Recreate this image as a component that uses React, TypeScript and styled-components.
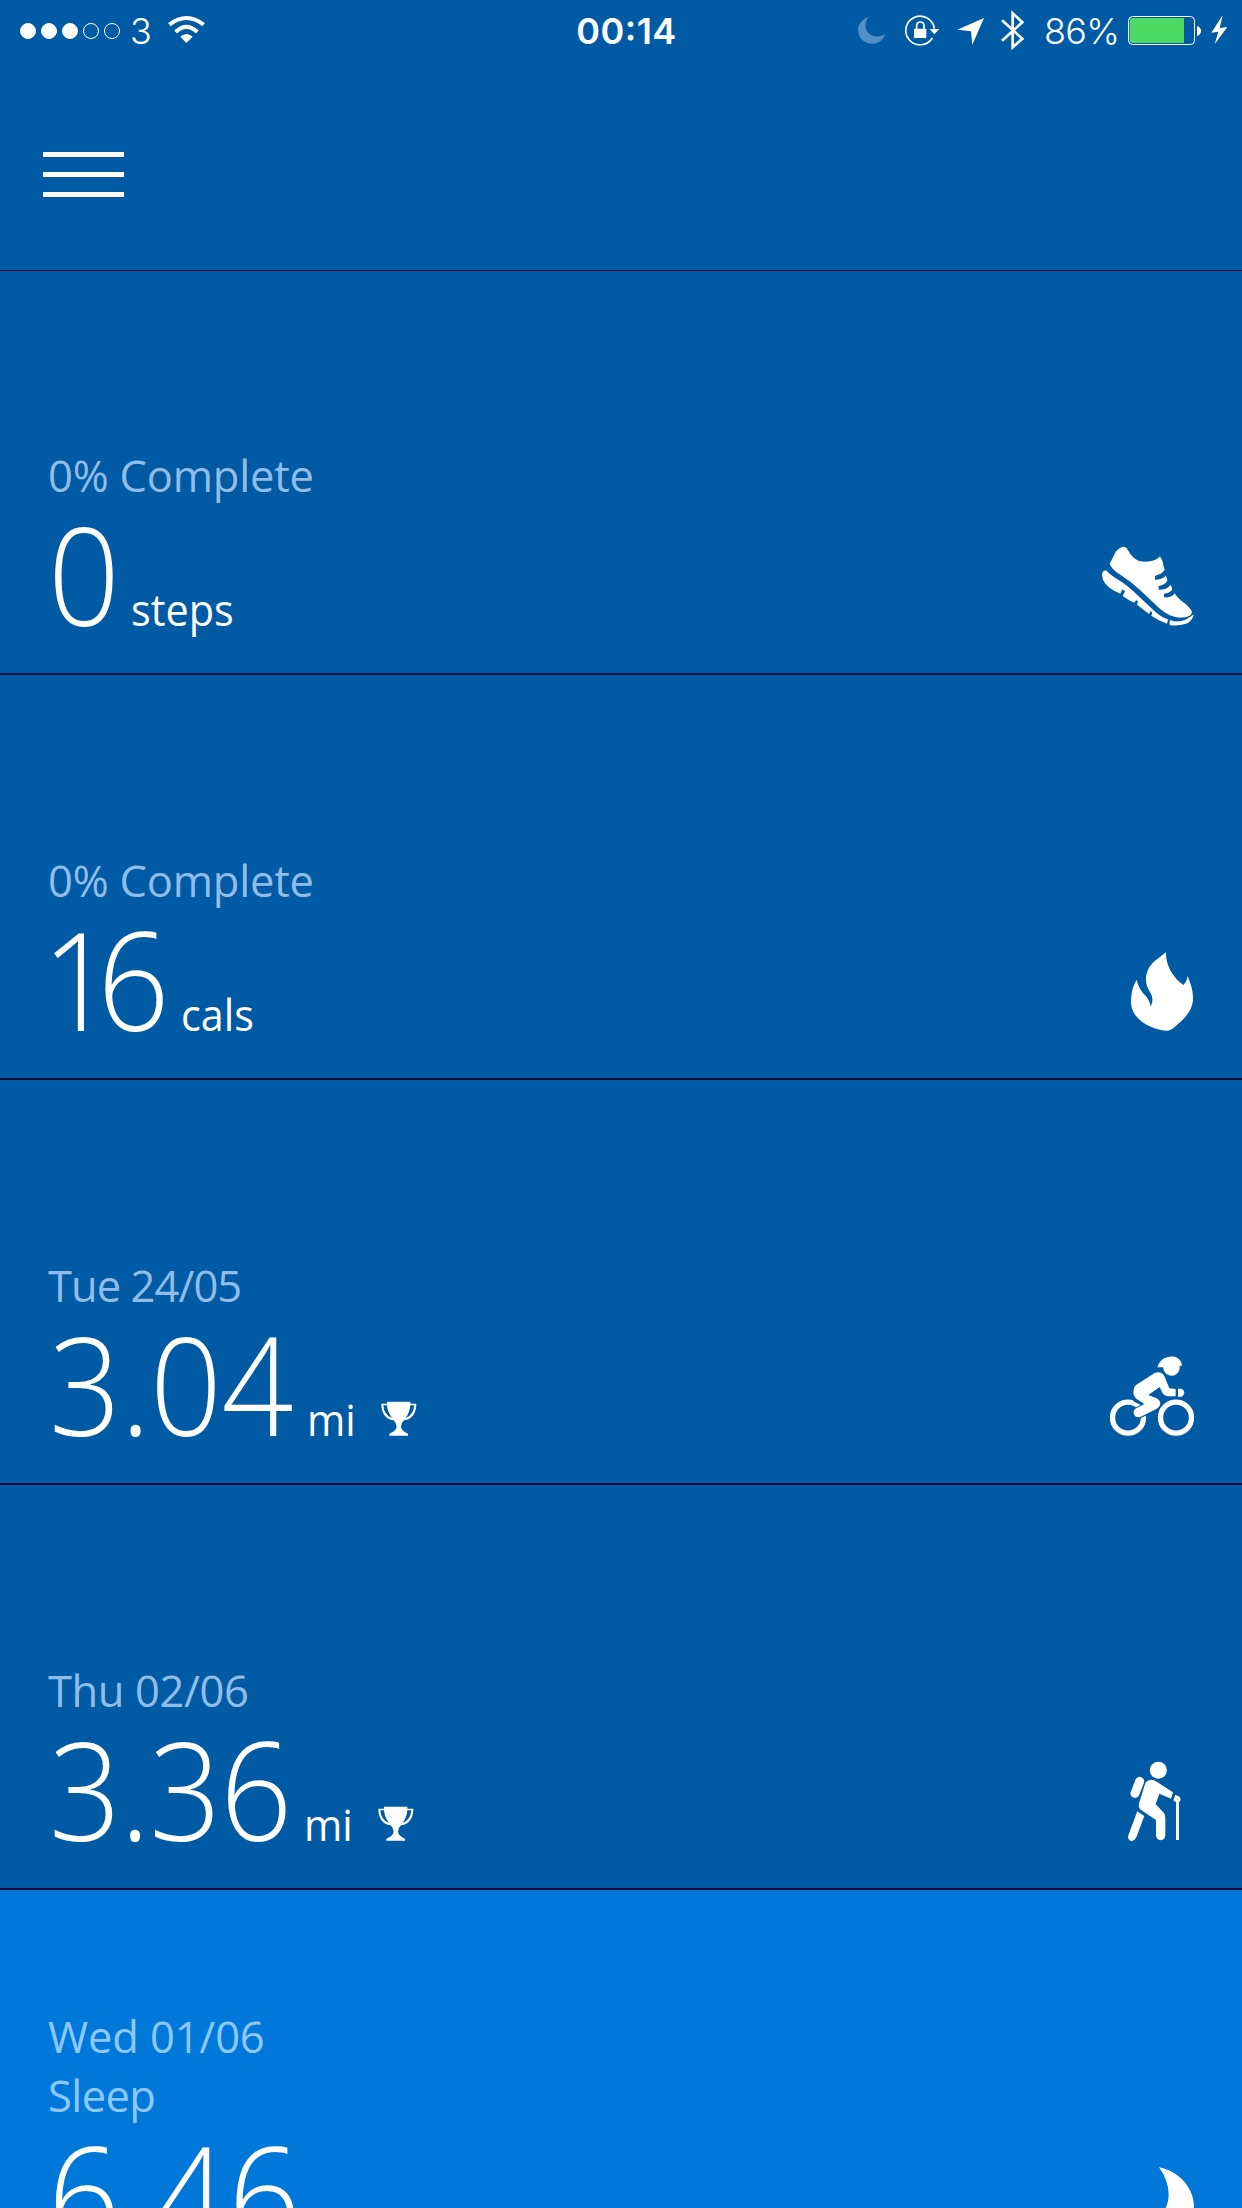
import React from "react";
import styled, { createGlobalStyle } from "styled-components";

const GlobalStyle = createGlobalStyle`
  html, body { margin: 0; padding: 0; background: #005aa4; }
  body { overflow: hidden; }
  svg { display: block; flex: none; }
`;

const Screen = styled.main`
  width: 1242px;
  height: 2208px;
  overflow: hidden;
  display: flex;
  flex-direction: column;
  background: #005aa4;
  color: #fff;
  font-family: "Open Sans", "Noto Sans", sans-serif;
`;

const StatusBar = styled.div`
  display: grid;
  grid-template-columns: 1fr auto 1fr;
  height: 60px;
  flex: none;
  font-family: Inter, Roboto, sans-serif;
  font-size: 36px;
  line-height: 62px;
`;

const StatusLeft = styled.div`
  display: flex;
  padding-left: 20px;
`;

const StatusRight = styled.div`
  display: flex;
  justify-content: flex-end;
  padding-right: 14px;
`;

const Signal = styled.div`
  display: flex;
  align-items: center;
  gap: 5px;
  margin-right: 10px;
`;

const SignalDot = styled.i<{ $on: boolean }>`
  box-sizing: border-box;
  width: 16px;
  height: 16px;
  border-radius: 50%;
  border: 1px solid #fff;
  background: ${(p) => (p.$on ? "#fff" : "transparent")};
`;

const Carrier = styled.span`
  width: 38px;
  font-weight: 350;
`;

const Clock = styled.span`
  padding-left: 11px;
  font-weight: 600;
  letter-spacing: 0.5px;
  font-feature-settings: "case";
`;

const Percent = styled.span`
  width: 84px;
  font-weight: 350;
  letter-spacing: -0.7px;
  white-space: nowrap;
`;

const Glyph = styled.svg<{ $gap?: number }>`
  height: 60px;
  margin-right: ${(p) => p.$gap ?? 0}px;
`;

const Header = styled.header`
  box-sizing: border-box;
  height: 211px;
  flex: none;
  padding: 92px 43px 0;
  border-bottom: 1px solid #0c0430;
`;

const MenuButton = styled.button`
  display: flex;
  flex-direction: column;
  gap: 15px;
  width: 81px;
  padding: 0;
  border: 0;
  background: none;
`;

const MenuLine = styled.span`
  height: 5px;
  background: #fff;
`;

const Tile = styled.section<{ $height?: number; $bright?: boolean }>`
  box-sizing: border-box;
  height: ${(p) => p.$height ?? 405}px;
  flex: none;
  display: flex;
  justify-content: space-between;
  align-items: flex-end;
  padding: 0 48px 42px;
  border-bottom: 2px solid #040c3c;
  background: ${(p) => (p.$bright ? "#0078d9" : "#005aa4")};
`;

const Info = styled.div<{ $bright?: boolean }>`
  display: flex;
  flex-direction: column;
  --label: ${(p) => (p.$bright ? "#8cc8fb" : "#8fbce8")};
`;

const Label = styled.div<{ $track: number }>`
  color: var(--label);
  font-size: 43.5px;
  line-height: 59px;
  letter-spacing: ${(p) => p.$track}px;
  white-space: nowrap;
`;

const Reading = styled.div`
  display: flex;
  align-items: baseline;
  margin-top: 10px;
  height: 116px;
  line-height: 116px;
`;

const Value = styled.span<{ $width: number; $track: number; $shift: number }>`
  width: ${(p) => p.$width - p.$shift}px;
  margin-left: ${(p) => p.$shift}px;
  font-size: 137px;
  font-weight: 300;
  letter-spacing: ${(p) => p.$track}px;
  transform: scaleX(0.92);
  transform-origin: left;
`;

const Unit = styled.span`
  width: 74.2px;
  font-size: 43.5px;
  transform: scaleX(0.95);
  transform-origin: left;
`;

const Art = styled.div<{ $inset?: number }>`
  margin: 0 ${(p) => p.$inset ?? 0}px 5px 0;
`;

const Trophy = () => (
  <svg width="36" height="35" viewBox="1142 451 108 105" fill="#fff">
    <path d="M1160 453H1230V459H1248C1248 488 1235 506 1211 509Q1202 517 1202 528Q1203 540 1223 549V555H1167V549Q1188 540 1189 528Q1188 517 1180 509C1156 506 1143 488 1143 459H1160ZM1149 464Q1151 494 1175 502Q1162 485 1160 464ZM1230 464Q1228 486 1216 502Q1239 494 1242 464Z" fillRule="evenodd" />
  </svg>
);

const Shoe = () => (
  <svg width="94" height="81" viewBox="60 46 282 243" fill="#fff">
    <path d="M89 102L108 65Q120 51 132 51Q141 53 145 63Q156 84 175 93Q200 100 225 91Q234 87 240 80Q248 92 250 107L254 121L243 132Q233 135 225 139V150Q247 150 257 138Q263 146 262 153Q256 165 236 169V180Q264 180 271 165Q278 174 276 181Q269 190 252 192V203Q276 205 284 191Q291 204 304 213Q328 230 335 244Q337 254 329 258Q311 267 286 262Q260 256 238 236L180 181Q153 156 119 134Q94 118 89 102Z" />
    <path d="M66 135Q67 123 78 122Q87 133 105 144Q143 166 173 197L223 244Q249 268 283 275Q315 278 341 254Q339 269 324 280Q304 289 271 287L268 283L270 272L264 270L261 282Q237 274 214 258L217 248L211 245L207 253L171 225L174 215L168 212L163 219Q145 212 128 199L135 185L127 179L121 192Q81 176 69 151Z" />
  </svg>
);

const Flame = () => (
  <svg width="62" height="79" viewBox="63 36 186 237" fill="#fff">
    <path d="M168 37C166 77 191 115 220 135Q231 125 233 108C240 129 249 145 249 175C249 216 217 241 195 260Q180 273 169 272C121 269 63 237 63 185Q63 146 80 119C85 143 97 157 109 170Q119 181 122 200Q133 179 122 160C106 135 104 115 113 92C122 68 147 54 168 37Z" />
  </svg>
);

const Cyclist = () => (
  <svg width="84" height="80" viewBox="60 46 252 240" fill="#fff">
    <circle cx="114" cy="231" r="46.5" fill="none" stroke="#fff" strokeWidth="16" />
    <circle cx="258" cy="231" r="46.5" fill="none" stroke="#fff" strokeWidth="16" />
    <path d="M144 217L193 191L144 169Q139 161 148 145L207 107L230 156H247" fill="none" stroke="#005aa4" strokeWidth="36" strokeLinejoin="round" />
    <path d="M131 148Q130 140 138 133L194 97Q214 89 223 106L238 143L257 145V167H232Q222 166 218 158L209 139L175 163L200 173Q214 181 210 193Q208 200 199 205L151 229Q138 232 132 222Q128 211 136 204L163 190L139 174Q128 164 131 148Z" />
    <path d="M264 144H275Q283 148 283 156Q282 164 275 168H264Z" />
    <path d="M202 80C210 53 235 44 257 49Q274 56 276 75H269Q271 95 254 104Q236 109 224 94Q219 86 220 80Z" />
  </svg>
);

const Hiker = () => (
  <svg width="67" height="80" viewBox="81 63 201 240" fill="#fff">
    <circle cx="175" cy="91" r="25.5" />
    <path d="M119 124L105 160" stroke="#fff" strokeWidth="27" strokeLinecap="round" />
    <path d="M137 127Q148 115 163 121L219 157L213 176L178 161L167 193L190 217Q196 224 196 234V286Q195 300 182 301Q169 300 168 286V240L122 209Q114 202 117 190Z" />
    <path d="M112 214L133 228L109 292Q103 304 93 303Q82 299 85 286Z" />
    <path d="M226 164L240 171L242 180L237 187V300H228V187L220 181Z" />
  </svg>
);

const Moon = () => (
  <svg width="80" height="80" viewBox="12 137 240 240" fill="#fff">
    <path d="M147 141C205 152 252 201 252 260C252 325 200 380 132 380C80 380 35 352 12 305C90 340 176 305 176 220Q174 178 147 141Z" />
  </svg>
);

type Entry = {
  labels: { text: string; track: number }[];
  value: { text: string; width: number; track: number; shift: number };
  unit?: string;
  trophy?: boolean;
  bright?: boolean;
  height?: number;
  inset?: number;
  Icon: React.FC;
};

const entries: Entry[] = [
  {
    labels: [{ text: "0% Complete", track: -0.2 }],
    value: { text: "0", width: 83, track: 0, shift: 0 },
    unit: "steps",
    height: 404,
    Icon: Shoe,
  },
  {
    labels: [{ text: "0% Complete", track: -0.2 }],
    value: { text: "16", width: 132.5, track: -18, shift: -6 },
    unit: "cals",
    inset: 1,
    Icon: Flame,
  },
  {
    labels: [{ text: "Tue 24/05", track: -0.95 }],
    value: { text: "3.04", width: 258.5, track: -0.5, shift: 1 },
    unit: "mi",
    trophy: true,
    Icon: Cyclist,
  },
  {
    labels: [{ text: "Thu 02/06", track: -0.4 }],
    value: { text: "3.36", width: 255.5, track: -1, shift: 1 },
    unit: "mi",
    trophy: true,
    Icon: Hiker,
  },
  {
    labels: [
      { text: "Wed 01/06", track: -0.15 },
      { text: "Sleep", track: -0.6 },
    ],
    value: { text: "6.46", width: 257, track: 2.4, shift: 0 },
    bright: true,
    Icon: Moon,
  },
];

export default function App() {
  return (
    <Screen>
      <GlobalStyle />
      <StatusBar>
        <StatusLeft>
          <Signal>
            {[true, true, true, false, false].map((on, i) => (
              <SignalDot key={i} $on={on} />
            ))}
          </Signal>
          <Carrier>3</Carrier>
          <Glyph width="38" viewBox="504 0 114 180" fill="none" stroke="#fff" strokeWidth="12">
            <path d="M508 74Q559 34 611 74M527 96Q559 65 592 96" />
            <path d="M541 110Q559 94 578 110L559 129Z" fill="#fff" stroke="none" />
          </Glyph>
        </StatusLeft>
        <Clock>00:14</Clock>
        <StatusRight>
          <Glyph width="28" viewBox="53 0 84 180" $gap={19}>
            <path d="M84 51C54 61 44 95 63 117C84 140 123 136 135 102C112 117 84 108 77 87Q72 68 84 51Z" fill="#528fc4" />
          </Glyph>
          <Glyph width="35" viewBox="194 0 105 180" $gap={17} fill="none" stroke="#fff">
            <path d="M276 114A43 43 0 1 1 282 86" strokeWidth="5" />
            <path d="M268 87H297L282 103Z" fill="#fff" stroke="none" />
            <rect x="221" y="86" width="37" height="28" rx="2" fill="#fff" stroke="none" />
            <path d="M229 87V76Q230 66 240 66Q250 66 251 76V87" strokeWidth="5" />
          </Glyph>
          <Glyph width="28" viewBox="351 0 84 180" $gap={16}>
            <path d="M432 54L397 134L393 94L352 89Z" fill="#fff" />
          </Glyph>
          <Glyph width="24" viewBox="485 0 72 180" $gap={19} fill="none" stroke="#fff" strokeWidth="8">
            <path d="M488 61L549 116L520 142V40L549 67L488 122" />
          </Glyph>
          <Percent>86%</Percent>
          <Glyph width="74" viewBox="864 0 222 180" $gap={9}>
            <rect x="865.5" y="49.5" width="198" height="84" rx="12" fill="none" stroke="#fff" strokeWidth="3" />
            <path d="M876 54H1032V129H876Q869 128 869 121V62Q869 55 876 54Z" fill="#4cd964" />
            <path d="M1071 78Q1083 82 1083 93Q1083 104 1071 108Z" fill="#fff" />
          </Glyph>
          <Glyph width="17" viewBox="1112 0 51 180">
            <path d="M1147 46L1113 98L1134 95L1123 133L1161 81L1138 84Z" fill="#fff" />
          </Glyph>
        </StatusRight>
      </StatusBar>
      <Header>
        <MenuButton aria-label="Menu">
          <MenuLine />
          <MenuLine />
          <MenuLine />
        </MenuButton>
      </Header>
      {entries.map(({ labels, value, unit, trophy, bright, height, inset, Icon }) => (
        <Tile key={value.text} $height={height} $bright={bright}>
          <Info $bright={bright}>
            {labels.map((l) => (
              <Label key={l.text} $track={l.track}>{l.text}</Label>
            ))}
            <Reading>
              <Value $width={value.width} $track={value.track} $shift={value.shift}>{value.text}</Value>
              {unit && <Unit>{unit}</Unit>}
              {trophy && <Trophy />}
            </Reading>
          </Info>
          <Art $inset={inset}>
            <Icon />
          </Art>
        </Tile>
      ))}
    </Screen>
  );
}
